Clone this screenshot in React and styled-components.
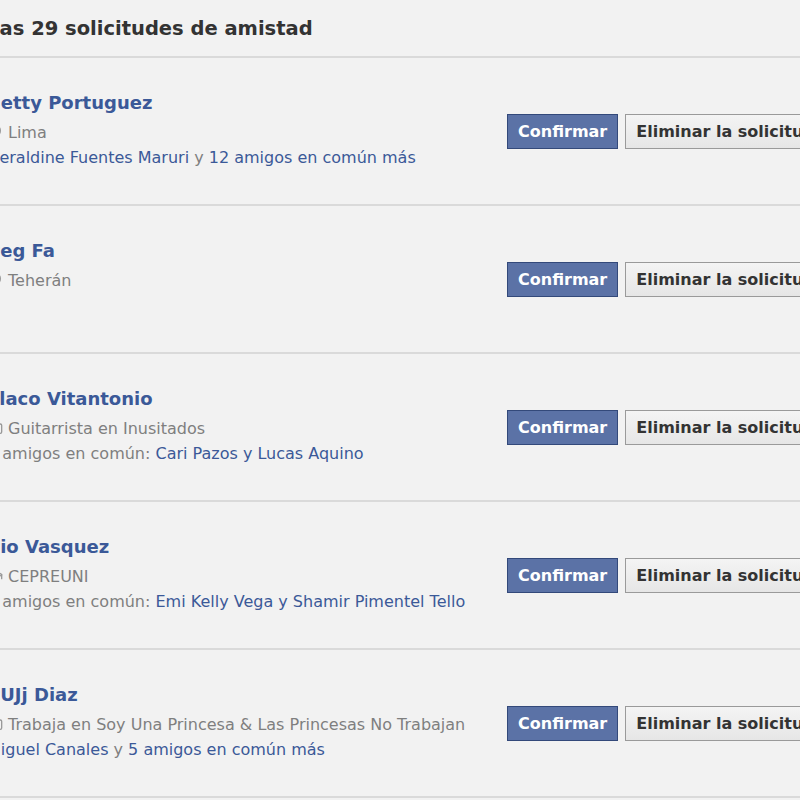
import React from 'react';
import styled, { createGlobalStyle } from 'styled-components';
import { MapPin, Briefcase, GraduationCap } from 'lucide-react';

const Global = createGlobalStyle`
  html, body { margin: 0; padding: 0; background: #f2f2f2; overflow: hidden; }
  body { font-family: "DejaVu Sans", "Liberation Sans", sans-serif; }
`;

const Page = styled.div`
  width: 800px;
  height: 800px;
  overflow: hidden;
  background: #f2f2f2;
`;

const Header = styled.div`
  height: 56px;
  display: flex;
  align-items: center;
  border-bottom: 2px solid #dadada;
`;

const Title = styled.h2`
  margin: 0 0 0 -100px;
  font-size: 19.5px;
  font-weight: bold;
  color: #333;
  white-space: nowrap;
`;

const Row = styled.div`
  height: 146px;
  display: flex;
  border-bottom: 2px solid #dadada;
`;

const Info = styled.div`
  flex: none;
  width: 520px;
  margin-left: -13px;
  padding-top: 33px;
`;

const Name = styled.a`
  display: block;
  font-size: 18px;
  line-height: 24px;
  font-weight: bold;
  color: #3b5998;
  margin-bottom: 4.5px;
  white-space: nowrap;
  text-decoration: none;
`;

const Line = styled.div`
  display: flex;
  align-items: center;
  gap: 5px;
  font-size: 16px;
  line-height: 25px;
  color: #7f7f7f;
  white-space: nowrap;
`;

const Text = styled.span`
  white-space: nowrap;
`;

const Link = styled.span`
  color: #3b5998;
`;

const Actions = styled.div`
  flex: none;
  display: flex;
  align-items: center;
  gap: 7px;
`;

const Button = styled.button`
  height: 35px;
  box-sizing: border-box;
  padding: 0 10px;
  font: bold 16px "DejaVu Sans", "Liberation Sans", sans-serif;
  border: 1px solid ${p => (p.$primary ? '#33497a' : '#9a9a9a')};
  background: ${p => (p.$primary ? '#5b72a6' : 'linear-gradient(#f4f4f4, #e6e6e6)')};
  color: ${p => (p.$primary ? '#fff' : '#333')};
  white-space: nowrap;
  cursor: pointer;
`;

const iconProps = { size: 16, color: '#999', strokeWidth: 2 };

const requests = [
  {
    name: 'Betty Portuguez',
    detail: { icon: <MapPin {...iconProps} />, text: 'Lima' },
    mutual: (
      <>
        <Link>Geraldine Fuentes Maruri</Link> y <Link>12 amigos en común más</Link>
      </>
    ),
  },
  {
    name: 'Peg Fa',
    detail: { icon: <MapPin {...iconProps} />, text: 'Teherán' },
  },
  {
    name: 'Flaco Vitantonio',
    detail: { icon: <Briefcase {...iconProps} />, text: 'Guitarrista en Inusitados' },
    mutual: (
      <>
        2 amigos en común: <Link>Cari Pazos y Lucas Aquino</Link>
      </>
    ),
  },
  {
    name: 'Pio Vasquez',
    detail: { icon: <GraduationCap {...iconProps} />, text: 'CEPREUNI' },
    mutual: (
      <>
        2 amigos en común: <Link>Emi Kelly Vega y Shamir Pimentel Tello</Link>
      </>
    ),
  },
  {
    name: 'PUJj Diaz',
    detail: {
      icon: <Briefcase {...iconProps} />,
      text: 'Trabaja en Soy Una Princesa & Las Princesas No Trabajan',
    },
    mutual: (
      <>
        <Link>Miguel Canales</Link> y <Link>5 amigos en común más</Link>
      </>
    ),
  },
];

export default function App() {
  return (
    <Page>
      <Global />
      <Header>
        <Title>Mostrar las 29 solicitudes de amistad</Title>
      </Header>
      {requests.map(r => (
        <Row key={r.name}>
          <Info>
            <Name href="#">{r.name}</Name>
            <Line>
              {r.detail.icon}
              <Text>{r.detail.text}</Text>
            </Line>
            {r.mutual && (
              <Line>
                <Text>{r.mutual}</Text>
              </Line>
            )}
          </Info>
          <Actions>
            <Button $primary>Confirmar</Button>
            <Button>Eliminar la solicitud</Button>
          </Actions>
        </Row>
      ))}
    </Page>
  );
}
